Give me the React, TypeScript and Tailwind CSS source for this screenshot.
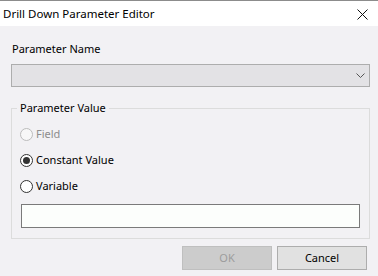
import React from "react";

function Radio({ label, checked, disabled }: { label: string; checked?: boolean; disabled?: boolean }) {
  return (
    <div className="flex items-center h-[16px]">
      <div
        className={
          disabled
            ? "w-[13px] h-[13px] rounded-full border border-[#bcbcbc] bg-[#f7f7f7] flex items-center justify-center"
            : "w-[13px] h-[13px] rounded-full border border-[#333333] bg-white flex items-center justify-center"
        }
      >
        {checked && <div className="w-[7px] h-[7px] rounded-full bg-[#333333]" />}
      </div>
      <span className={disabled ? "ml-[3px] text-[#8d8d8d]" : "ml-[3px] text-black"}>{label}</span>
    </div>
  );
}

export default function App() {
  return (
    <div
      className="w-[378px] h-[276px] bg-[#f2f1f4] flex flex-col text-[11px] leading-[16px] text-black overflow-hidden"
      style={{ fontFamily: '"Noto Sans", "Segoe UI", sans-serif' }}
    >
      <div className="h-[1px] bg-[#8c8c8c]" />
      <div className="h-[25px] bg-white flex items-center justify-between pl-[3px] pr-[10px]">
        <span className="text-[11.5px]">Drill Down Parameter Editor</span>
        <svg width="11" height="11" viewBox="0 0 11 11" className="mt-[1px]">
          <path d="M0.5 0.5 L10.5 10.5 M10.5 0.5 L0.5 10.5" stroke="#111" strokeWidth="1" />
        </svg>
      </div>
      <div className="flex flex-col pl-[11px] pr-[8px] pt-[15px]">
        <div className="pl-[1px]">Parameter Name</div>
        <div className="mt-[7px] h-[23px] border border-[#adadad] bg-[#e3e2e5] flex items-center justify-end pr-[4px]">
          <svg width="9" height="6" viewBox="0 0 9 6">
            <path d="M0.5 0.5 L4.5 4.5 L8.5 0.5" stroke="#555" strokeWidth="1" fill="none" />
          </svg>
        </div>
        <fieldset className="mt-[13px] border border-[#dcdcdc] h-[139px] px-0">
          <legend className="ml-[5px] px-[3px]">Parameter Value</legend>
          <div className="flex flex-col px-[8px] pt-[10px] gap-[10px]">
            <Radio label="Field" disabled />
            <Radio label="Constant Value" checked />
            <Radio label="Variable" />
          </div>
          <div className="px-[9px] mt-[10px]">
            <div className="h-[24px] border border-[#7a7a7a] bg-[#fcfefc]" />
          </div>
        </fieldset>
        <div className="flex justify-end gap-[5px] mt-[7px] pr-[3px]">
          <div className="w-[90px] h-[24px] border border-[#bfbfbf] bg-[#cccccc] flex items-center justify-center text-[#9c9c9c]">
            OK
          </div>
          <div className="w-[90px] h-[24px] border border-[#adadad] bg-[#e1e1e1] flex items-center justify-center">
            Cancel
          </div>
        </div>
      </div>
    </div>
  );
}
